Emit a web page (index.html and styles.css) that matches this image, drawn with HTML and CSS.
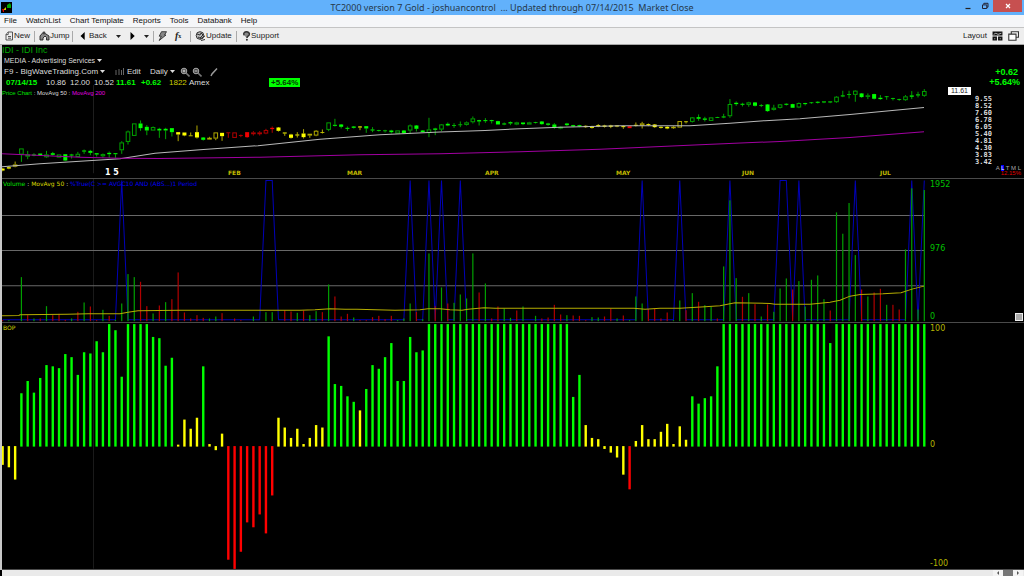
FILE: index.html
```html
<!DOCTYPE html>
<html lang="en">
<head>
<meta charset="utf-8">
<title>TC2000 version 7 Gold</title>
<link rel="stylesheet" href="styles.css">
</head>
<body>
<header class="titlebar">
  <svg class="app-icon" viewBox="0 0 11 11"><rect width="11" height="11" fill="#000"/><path d="M6 3l3-2 1 2v3H6z" fill="#0a0"/><path d="M1 7h2v3H2z" fill="#d00"/><path d="M3 7l2-2v3H3z" fill="#cc0"/></svg>
  <h1 class="title">TC2000 version 7 Gold - joshuancontrol &nbsp;... Updated through 07/14/2015 &nbsp;Market Close</h1>
  <div class="window-buttons">
    <button class="win" aria-label="Minimize"><svg viewBox="0 0 8 8"><path d="M1.500 6.500h5" stroke="#222" stroke-width="1.200"/></svg></button>
    <button class="win" aria-label="Restore"><svg viewBox="0 0 8 8" fill="none" stroke="#223"><path d="M1.500 2.900h4.300v3.600H1.500zM2.800 2.500V1.300h4.200v3.900H6"/></svg></button>
    <button class="win win-close" aria-label="Close"><svg viewBox="0 0 8 8"><path d="M2 2l4 4M6 2L2 6" stroke="#fff" stroke-width="1.200"/></svg></button>
  </div>
</header>
<nav class="menubar">
  <button>File</button><button>WatchList</button><button>Chart Template</button><button>Reports</button><button>Tools</button><button>Databank</button><button>Help</button>
</nav>
<div class="toolbar">
  <div class="group group-new"><button><svg class="ico" viewBox="0 0 9 10" fill="#eee" stroke="#444" stroke-width=".9"><path d="M3 1h4.500v8H1V3.500z"/><path d="M3.200 1v2.600H1M3 5.500h3M3 7.200h3"/></svg>New</button></div>
  <div class="group group-jump"><button><svg class="ico ico-wide" viewBox="0 0 11 10"><path d="M1 9V5l3-3.500L7 3l3 2v4H7.500V6.500L6 5 4 7v2z" fill="#888" stroke="#222" stroke-width=".9"/><circle cx="5" cy="2" r="1.400" fill="#444"/></svg>Jump</button></div>
  <div class="group group-back">
    <button class="back"><svg class="arrow" viewBox="0 0 5 8"><path d="M4.700 0v8L.5 4z"/></svg>Back</button>
    <button aria-label="Back history"><svg class="drop" viewBox="0 0 5 3"><path d="M0 0h5L2.500 3z"/></svg></button>
    <button aria-label="Forward"><svg class="arrow" viewBox="0 0 5 8"><path d="M.5 0v8l4.200-4z"/></svg></button>
    <button aria-label="Forward history"><svg class="drop" viewBox="0 0 5 3"><path d="M0 0h5L2.500 3z"/></svg></button>
  </div>
  <div class="group group-fx">
    <button aria-label="Alerts"><svg class="ico" viewBox="0 0 9 10"><path d="M3.500.7h5L6.500 4H8L1.200 9.500 3.300 5.200H1.200z" fill="#888" stroke="#222" stroke-width=".8"/></svg></button>
    <button class="fx" aria-label="Formula"><i>f</i><small>x</small></button>
  </div>
  <div class="group group-update"><button><svg class="ico ico-wide" viewBox="0 0 11 10"><circle cx="5" cy="4.500" r="3.800" fill="#bbb" stroke="#333"/><path d="M2 3l3 1 1-2 2 2-3 3-2-1M5 8l5-3M6 9.500l4-1" fill="none" stroke="#333"/></svg>Update</button></div>
  <div class="group group-support"><button><svg class="ico" viewBox="0 0 9 10"><path d="M2 4.200C1 1.500 3 .8 4.500.8s3.500 1 2.800 3C6.800 5 5 5 5 7" fill="#888" stroke="#333" stroke-width="1.500"/><circle cx="4.900" cy="8.700" r="1" fill="#333"/></svg>Support</button></div>
  <div class="group group-layout">
    <button>Layout</button>
    <button aria-label="Layout grid"><svg class="ico-wide" viewBox="0 0 10 9"><path d="M.5.5h9v3.600h-9zM.5 5h4v3.500h-4zM5.500 5h4v3.500h-4z" fill="#111"/><path d="M1.500 3l2-1 2 1 3-1M2 7h1M7 7h1" stroke="#ddd" stroke-width=".7" fill="none"/></svg></button>
    <button aria-label="Windows"><svg class="ico-wide" viewBox="0 0 10 9" fill="#fff" stroke="#333"><path d="M3 .7h6.500v5H3z"/><path d="M.7 2.800h6.600v5.500H.7z"/></svg></button>
  </div>
</div>
<main class="charts">
  <section class="panel panel-price">
    <svg class="plot" id="price" viewBox="2 45 926 133" preserveAspectRatio="none" role="img" aria-label="Price chart"></svg>
    <div class="info">
      <h2 class="symbol">IDI - IDI Inc</h2>
      <button class="sector">MEDIA - Advertising Services <svg class="drop" viewBox="0 0 5 3"><path d="M0 0h5L2.500 3z"/></svg></button>
      <div class="tools">
        <button class="template">F9 - BigWaveTrading.Com <svg class="drop" viewBox="0 0 5 3"><path d="M0 0h5L2.500 3z"/></svg></button>
        <button class="edit"><svg viewBox="0 0 9 7"><path d="M1 2v5M4 1v6M6.500 2v5M8.500 0v7" stroke="#666"/></svg>Edit</button>
        <button class="daily">Daily <svg class="drop" viewBox="0 0 5 3"><path d="M0 0h5L2.500 3z"/></svg></button>
        <button aria-label="Zoom in"><svg class="tool" viewBox="0 0 10 10"><path d="M6 6l3.500 3.500" stroke="#777" stroke-width="1.600"/><circle cx="4" cy="4" r="2.800" fill="#444" stroke="#aaa"/><path d="M2.500 4h3M4 2.500v3" stroke="#eee" stroke-width=".8"/></svg></button>
        <button aria-label="Zoom out"><svg class="tool" viewBox="0 0 10 10"><path d="M6 6l3.500 3.500" stroke="#777" stroke-width="1.600"/><circle cx="4" cy="4" r="2.800" fill="#444" stroke="#aaa"/><path d="M2.500 4h3" stroke="#eee" stroke-width=".8"/></svg></button>
        <button class="draw" aria-label="Draw line"><svg class="tool" viewBox="0 0 10 10"><path d="M2 9l1-2 5-5.500" stroke="#999" stroke-width="1.500" fill="none"/></svg></button>
      </div>
      <div class="quote">
        <b class="up">07/14/15</b><span>10.86</span><span>12.00</span><span>10.52</span><b class="up">11.61</b><b class="up">+0.62</b><span class="vol">1822</span><span>Amex</span><b class="badge">+5.64%</b>
      </div>
      <div class="legend"><span class="green">Price Chart</span> : MovAvg 50 : <span class="magenta">MovAvg 200</span></div>
    </div>
    <div class="months" id="months"></div>
    <div class="axis axis-price">
      <b class="change">+0.62</b>
      <b class="change change-pct">+5.64%</b>
      <span class="last">11.61</span>
      <ol class="levels"><li>9.55</li><li>8.52</li><li>7.60</li><li>6.78</li><li>6.05</li><li>5.40</li><li>4.81</li><li>4.30</li><li>3.83</li><li>3.42</li></ol>
      <div class="scale">A <mark>L</mark> T M L</div>
      <div class="range">12.15%</div>
    </div>
  </section>
  <section class="panel panel-volume">
    <svg class="plot" id="volume" viewBox="2 179 926 143" preserveAspectRatio="none" role="img" aria-label="Volume"></svg>
    <div class="legend"><span class="green">Volume</span> : <span class="yellow">MovAvg 50</span> : <span class="blue">%True(C &gt;= AVGC10 AND (ABS...)1 Period</span></div>
    <div class="axis axis-volume"><span>1952</span><span>976</span><span>0</span></div>
    <button class="pane-handle" aria-label="Resize panes"></button>
  </section>
  <section class="panel panel-bop">
    <svg class="plot" id="bop" viewBox="2 323 926 246" preserveAspectRatio="none" role="img" aria-label="Balance of power"></svg>
    <div class="legend yellow">BOP</div>
    <div class="axis axis-bop"><span>100</span><span>0</span><span>-100</span></div>
  </section>
</main>
<footer class="scrollbar">
  <button aria-label="Scroll left"><svg viewBox="0 0 4 6"><path d="M3 1v4L1 3z"/></svg></button><span class="thumb"></span><button aria-label="Scroll right"><svg viewBox="0 0 4 6"><path d="M1 1v4l2-2z"/></svg></button>
</footer>
<script src="charts.js"></script>
</body>
</html>
```
FILE: styles.css
```css
* { box-sizing: border-box; }
body {
  margin: 0;
  height: 100vh;
  overflow: hidden;
  display: flex;
  flex-direction: column;
  background: #000;
  color: #ddd;
  font: 8px/10px "Liberation Sans", Arial, sans-serif;
}
button { all: unset; box-sizing: border-box; display: flex; align-items: center; white-space: pre; }
svg { display: block; }
h1, h2, ol { margin: 0; padding: 0; font-weight: normal; list-style: none; }

.titlebar {
  flex: none; height: 15px;
  display: grid; grid-template-columns: 1fr auto 1fr;
  background: #62b1fb; color: #26384a;
}
.app-icon { width: 11px; height: 11px; margin: 2px 1px; }
.title { font: 9px/15px "Noto Sans", sans-serif; }
.window-buttons { display: flex; justify-content: flex-end; align-items: flex-start; padding-right: 2px; }
.win { width: 17px; height: 12px; justify-content: center; }
.win svg { width: 8px; height: 8px; }
.win-close { width: 29px; background: #c75050; }

.menubar {
  flex: none; height: 13px;
  display: flex; gap: 9px; padding-left: 4px;
  background: #f5f6f8; border-bottom: 1px solid #c4c4c4;
  color: #111; font-size: 8px;
}
.toolbar {
  flex: none; height: 17px;
  display: flex; align-items: center;
  background: #eee; border-bottom: 1px solid #a8a8a8;
  color: #222;
}
.group { display: flex; align-items: center; height: 11px; padding-left: 5px; border-right: 1px solid #aaa; }
.group-new { width: 35px; }
.group-jump { width: 38px; padding-left: 4px; }
.group-back { width: 81px; padding-left: 7px; gap: 9px; }
.back .arrow { margin-right: 4px; }
.group-fx { width: 37px; padding-left: 4px; gap: 8px; }
.group-update { width: 46px; padding-left: 4px; }
.group-support { border: 0; }
.group-layout { margin-left: auto; border: 0; padding-right: 5px; gap: 5px; }
.ico { width: 9px; height: 10px; }
.ico-wide { width: 11px; height: 10px; }
.arrow { width: 5px; height: 8px; }
.drop { width: 5px; height: 3px; fill: currentColor; }
.fx { font: bold 10px/10px "Liberation Serif", serif; }
.fx small { font-size: 6px; }

.charts {
  flex: 1; min-height: 0;
  display: flex; flex-direction: column;
  border-left: 2px solid #c8c8c8;
}
.panel {
  position: relative; min-height: 0;
  display: grid; grid-template: minmax(0, 1fr) / minmax(0, 1fr) 96px;
  border-bottom: 1px solid #4a4a4a;
}
.panel-price { flex: 134; }
.panel-volume { flex: 144; }
.panel-bop { flex: 247; }
.plot, .info, .legend { grid-area: 1 / 1; }
.plot { width: 100%; height: 100%; }
.axis { grid-area: 1 / 2; display: flex; flex-direction: column; padding-left: 2px; }
.info { display: flex; flex-direction: column; align-items: flex-start; }
.symbol { color: #00a800; font-size: 9px; line-height: 10px; }
.sector { padding-left: 2px; font-size: 7px; height: 11px; }
.tools { display: flex; align-items: center; height: 11px; padding-left: 2px; }
.template { width: 111px; }
.edit { width: 35px; }
.edit svg { width: 9px; height: 7px; margin-right: 3px; }
.daily { width: 28px; }
.tool { width: 10px; height: 10px; margin-left: 2px; }
.draw { margin-left: 5px; }
.quote {
  display: grid; align-items: center; height: 11px; padding-left: 4px;
  grid-template-columns: 40px 24px 24px 22px 25px 28px 20px 80px auto;
}
.badge { background: #0f0; color: #053505; line-height: 9px; padding: 0 2px; }
.up { color: #0f0; }
.vol { color: #cc0; }
.legend { font: 6px/10px "DejaVu Sans", sans-serif; white-space: pre; padding-left: 1px; }
.info .legend { font-family: "Liberation Sans", Arial, sans-serif; padding-left: 0; }
.green { color: #00e000; }
.yellow { color: #d8d800; }
.magenta { color: #e000e0; }
.blue { color: #0000f0; }
.months { grid-area: 1 / 1; position: relative; align-self: end; height: 9px; font: bold 6px/8px "DejaVu Sans", sans-serif; color: #c0b800; }
.month { position: absolute; }
.month-year { color: #fff; font-size: 8px; }

.axis-price { padding-top: 22px; padding-right: 3px; }
.change { align-self: flex-end; margin-right: 3px; color: #0f0; font-size: 9px; line-height: 10px; }
.change-pct { margin-right: 1px; }
.last { align-self: flex-start; margin-left: 18px; padding: 0 3px; background: #fff; color: #222; font-size: 7px; line-height: 8px; }
.levels { margin: 1px 0 0 45px; font: bold 7px/7px "DejaVu Sans Mono", monospace; color: #ddd; }
.scale, .range { text-align: right; font-size: 6px; line-height: 5px; white-space: pre; color: #aaa; }
.scale mark { background: #00f; color: #fff; }
.range { color: #e00000; }
.axis-volume, .axis-bop { justify-content: space-between; padding-top: 1px; font: 8px/10px "DejaVu Sans", sans-serif; }
.axis-volume span:nth-child(2), .axis-bop span:nth-child(2) { margin-bottom: 4px; }
.axis-volume { color: #00c000; }
.axis-bop { color: #b4b400; }
.pane-handle { position: absolute; right: 1px; bottom: 1px; width: 8px; height: 8px; background: #aaa; border: 1px solid #eee; }

.scrollbar { flex: none; height: 6px; display: flex; justify-content: flex-end; background: #eaeaea; padding-right: 1px; margin-left: 2px; }
.scrollbar button { width: 10px; justify-content: center; background: #f4f4f4; }
.scrollbar svg { width: 4px; height: 6px; fill: #555; }
.thumb { width: 10px; background: #777; }
```
FILE: charts.js
```js
const STEP = 6.27, START = 2.6;
const xAt = i => START + STEP * i;
const fill = (value, count) => Array(count).fill(value);

function add(svg, name, attrs) {
  const el = document.createElementNS("http://www.w3.org/2000/svg", name);
  for (const key in attrs) el.setAttribute(key, attrs[key]);
  svg.appendChild(el);
}
function bar(svg, x, top, bottom, width, color) {
  add(svg, "rect", { x: x - width / 2, y: top, width, height: Math.max(0.7, bottom - top), fill: color });
}
function line(svg, points, color, width = 1) {
  add(svg, "polyline", { points, fill: "none", stroke: color, "stroke-width": width });
}

/* Balance of power, -100 to 100 */
const bop = [-15,-17,-27,43.5,53.5,44,56,66.5,65.5,64,75.5,73,58.5,77,76,86,77,100,95,57,100,100,100,100,
  89.5,88.5,66,72.5,1.5,22,14.5,23.5,65.5,2,-3,10.5,-92.5,-100,-86,-62,-66,-55.5,-71,-40,23.5,15.5,7,14.5,
  2,7,17.5,15.5,90,51,49.5,41,36.5,29.5,47,66.5,63.5,73,84.5,53.5,53.5,89.5,77,78.5,
  ...fill(100, 23),40.5,58.5,17.5,7,6,-2,-5,-9,-23,-35,4.5,17.5,6,6,12,18.5,2,16.5,5.5,41,35,39.5,41,65.5,
  ...fill(100, 17),84.5,...fill(100, 15)];
const bopSvg = document.getElementById("bop");
bar(bopSvg, 93.5, 323, 569, 1, "#1a1a1a");
bop.forEach((v, i) => {
  const color = v > 30 ? "#00ff00" : v < -30 ? "#ff0000" : v === 29.5 || v < 30 ? "#ffff00" : "#00ff00";
  const y = 446.7 - v * 1.226;
  bar(bopSvg, xAt(i), Math.min(y, 446.3), Math.max(y, 446.8), 2.4, color);
});

/* Volume bars; negative marks a down day */
const volume = [-3,3,0,132,-18,8,-8,45,-18,-22,-4,8,-28,56,-44,-3,34,-16,4,53,141,132,-118,-45,23,-47,57,-66,-146,
  -26,-8,-18,-10,8,14,-24,0,-8,-3,0,14,0,27,27,0,-33,-29,25,-32,18,30,-27,110,-74,-14,-22,11,-3,-3,-12,-16,-6,-16,
  3,8,53,-28,6,203,-45,101,-53,55,80,68,203,-86,113,-8,-44,38,10,-32,44,0,16,-8,-11,-49,-20,18,-17,-16,-3,12,11,
  -14,-38,8,-17,3,74,53,-36,-38,-8,-26,3,62,-33,84,-58,48,43,-8,164,362,129,-73,84,-51,14,-50,28,98,128,-95,120,
  44,124,137,66,-32,326,262,354,198,-95,74,-86,-97,49,-49,-35,215,398,35,393];
const signals = new Set([19,42,43,65,68,70,73,102,108,116,124,125,127,136,145,147]);
const volSvg = document.getElementById("volume");
bar(volSvg, 93.5, 179, 322, 1, "#1a1a1a");
[215.5, 250.5, 285.5].forEach(y => line(volSvg, `2,${y} 924,${y}`, "#686868"));
line(volSvg, volume.map((_, i) => `${xAt(i)},${signals.has(i) ? 180.5 : 319.5}`).join(" "), "#0000b8");
volume.forEach((v, i) => {
  if (v) bar(volSvg, xAt(i), 321 - Math.abs(v) / 3, 321, 1.2, v > 0 ? "#00a000" : "#b00000");
});
line(volSvg, "2,315.5 19,315.3 20,314.5 67,314 88,313.5 120,313.5 128,312 138,310.5 180,310 300,310 315,309.5 330,308.5 345,309 357,309 395,310 420,309.5 428,308.7 440,308.7 450,309.5 462,310 468,309 484,307.5 495,308 634,308 645,309 660,308 680,308 705,306.5 720,305.5 735,302.7 770,303.3 775,304 810,304 830,302 840,300 850,296 860,294.3 883,293.7 901,292.7 912,289 924,286", "#b4ac00");

/* Candles: top of body, bottom of body, high, low, solid (1) or hollow (0); thirds of a unit below 85 */
const candles = [
[250,256,248,258,1],[246,250,242,251,1],[238,244,229,245,0],[190,208,190,230,0],[208,214,197,222,0],[208,211,204,213,1],[205,210,205,212,1],[208,216,197,218,0],
[204,209,200,210,1],[208,217,208,217,0],[207,226,207,228,1],[208,211,206,220,1],[206,215,200,215,0],[196,199,193,206,1],[197,203,194,210,1],[204,208,204,214,1],
[207,213,205,218,0],[203,207,199,218,1],[204,207,204,218,1],[172,195,168,206,0],[139,170,136,178,0],[115,152,115,152,0],[115,129,106,137,1],[125,136,120,150,1],
[126,136,124,136,0],[131,136,128,158,1],[131,136,128,162,1],[129,141,129,154,1],[141,148,141,168,1],[142,151,142,152,1],[151,153,142,153,1],[141,157,121,160,1],
[157,164,156,166,1],[158,163,155,163,0],[142,160,142,165,0],[143,153,143,167,1],[142,144,142,158,1],[142,158,142,158,0],[150,152,148,156,1],[141,156,141,158,1],
[142,147,138,151,0],[142,147,138,151,0],[135,145,131,147,0],[128,132,124,143,1],[127,137,126,138,1],[142,145,142,152,1],[148,158,146,159,1],[148,151,141,157,1],
[145,156,132,160,1],[146,151,146,158,0],[137,151,135,152,0],[141,143,133,145,1],[112,134,112,138,0],[119,122,101,124,1],[118,125,117,130,1],[128,131,124,137,1],
[124,128,123,129,1],[124,127,123,135,1],[123,130,123,143,1],[133,136,126,141,1],[135,137,134,138,1],[136,138,134,142,1],[136,141,134,145,1],[136,145,136,145,0],
[136,144,135,145,1],[121,136,118,146,0],[121,131,120,139,1],[136,141,135,141,1],[133,143,98,156,0],[130,134,128,150,1],[118,133,117,138,0],[116,121,112,122,1],
[120,122,114,128,1],[118,120,109,126,1],[112,119,109,120,0],[100,111,94,115,0],[105,109,104,121,1],[105,108,99,113,1],[105,108,104,115,1],[108,118,107,118,1],
[115,118,112,120,1],[111,115,109,120,1],[112,118,110,119,0],[112,117,112,120,1],[112,118,110,118,0],[111,113,110,114,1],[109,117,108,118,1],[115,119,113,122,1],
[118,128,114,131,1],[125,130,124,131,0],[115,120,113,123,1],[120,124,119,125,1],[120,124,119,126,1],[122,126,121,127,1],[123,128,122,129,1],[120,124,117,125,1],
[121,125,119,126,1],[121,125,119,129,1],[121,124,120,126,1],[123,126,121,131,1],[123,129,123,129,1],[119,122,112,124,1],[115,121,110,130,0],[117,120,115,123,1],
[118,126,117,127,1],[125,128,123,129,1],[125,130,123,131,1],[125,129,123,130,0],[108,127,108,127,0],[109,111,108,115,1],[97,110,96,112,0],[96,101,88,107,1],
[100,104,95,109,1],[97,107,97,107,0],[96,98,95,98,1],[94,97,86,99,1],[57,93,42,98,0],[53,57,49,62,1],[56,59,53,64,1],[52,59,50,65,0],
[52,62,51,63,1],[60,62,57,66,1],[58,78,57,79,1],[68,74,59,75,0],[58,68,57,70,0],[56,59,55,60,1],[57,68,56,68,1],[54,67,52,69,0],
[54,57,53,61,1],[52,54,51,55,1],[50,53,49,55,1],[49,52,49,53,1],[49,52,49,53,1],[35,51,33,52,0],[31,34,17,36,1],[27,29,17,40,1],
[17,29,16,50,0],[25,36,24,38,1],[31,35,25,42,0],[27,41,26,42,1],[38,42,30,44,1],[34,36,33,44,1],[39,41,38,46,1],[42,44,41,47,1],
[34,45,30,47,0],[31,35,18,42,1],[28,31,20,37,1],[18,32,12,35,0]];
const yellowDays = [[0,2],[28,31],[33,35],[44,51],[57,57],[93,99],[101,109]];
const redDays = [[36,43],[100,100]];
const within = (i, ranges) => ranges.some(([a, b]) => i >= a && i <= b);
const priceSvg = document.getElementById("price");
const yAt = v => 85 + v / 3;
bar(priceSvg, 93.5, 85, 173, 1, "#1e1e1e");
candles.forEach(([top, bottom, high, low, solid], i) => {
  const [bright, dim] = within(i, yellowDays) ? ["#ffff00", "#b0a800"] : within(i, redDays) ? ["#f00000", "#b00000"] : ["#00ff00", "#00a000"];
  const x = xAt(i);
  if (high < top) bar(priceSvg, x, yAt(high), yAt(top), 1, dim);
  if (low > bottom) bar(priceSvg, x, yAt(bottom), yAt(low), 1, dim);
  if (solid) bar(priceSvg, x, yAt(top), yAt(bottom), 4, bright);
  else add(priceSvg, "rect", { x: x - 1.8, y: yAt(top) + 0.4, width: 3.6, height: (bottom - top) / 3 - 0.8, fill: "#000", stroke: dim, "stroke-width": 1 });
});
line(priceSvg, "2,166.5 40,163.5 120,158.5 155,153 200,149.5 258,145.5 320,139 380,134.5 440,131.8 485,130.3 520,128.5 560,127 620,125.7 690,125.7 730,123 765,120.5 800,118.5 850,114.5 924,107.3", "#b8b8b8");
line(priceSvg, "2,153.5 80,157 120,158 160,158.3 260,157 360,154.5 440,153.5 520,151.5 600,149 700,144.5 780,141.3 850,137.3 924,131.5", "#a000a0");

const months = [["1 5", 105], ["FEB", 228], ["MAR", 347], ["APR", 485], ["MAY", 616], ["JUN", 742], ["JUL", 880]];
months.forEach(([label, x]) => {
  const el = document.createElement("span");
  el.className = label === "1 5" ? "month month-year" : "month";
  el.textContent = label;
  el.style.left = (x - 2) / 9.26 + "%";
  document.getElementById("months").appendChild(el);
});
```
